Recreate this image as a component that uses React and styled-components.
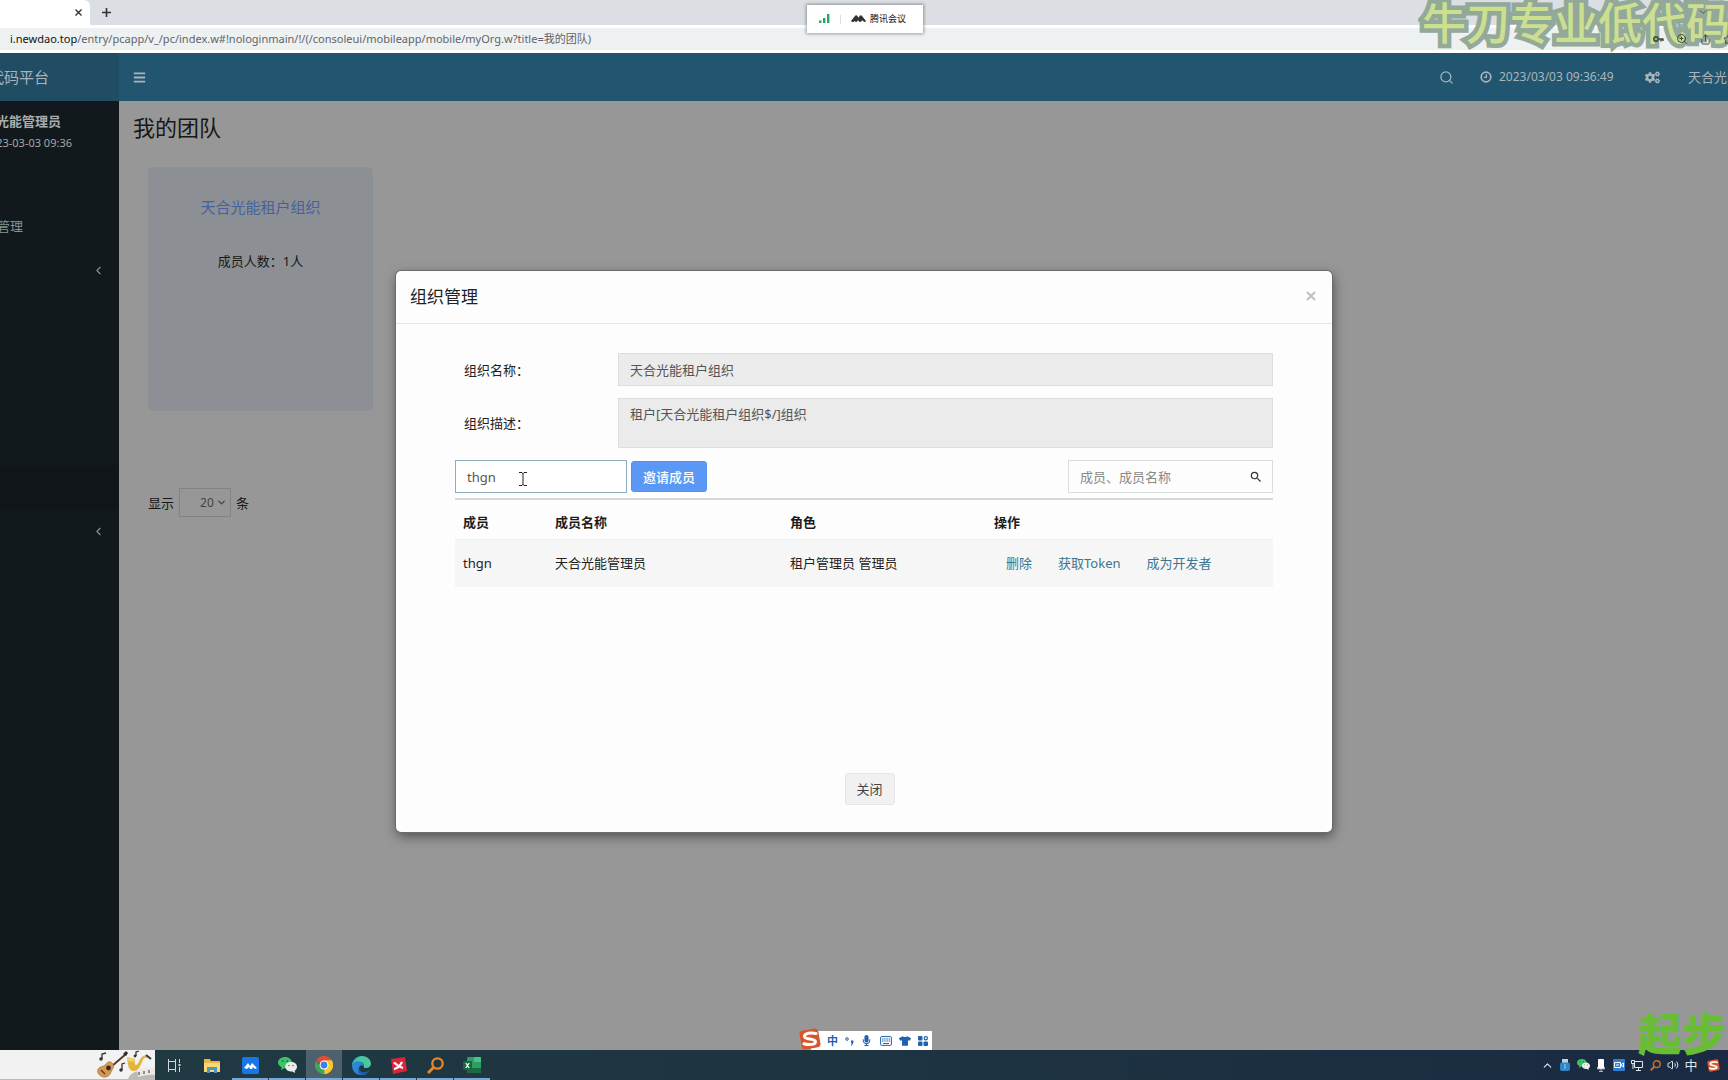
import React from "react";
import styled, { createGlobalStyle, css } from "styled-components";
import { Search, ZoomIn, Share, Star, ChevronDown, ChevronLeft, ChevronUp, Volume2 } from "lucide-react";
import { FaBars, FaCogs, FaMicrophone, FaTshirt } from "react-icons/fa";
import { MdSearch } from "react-icons/md";

const GlobalStyle = createGlobalStyle`
  * { box-sizing: border-box; }
  html, body, #root { height: 100%; }
  body {
    margin: 0;
    overflow: hidden;
    background: #979797;
    color: #222;
    font: 13px/20px "Noto Sans", "Noto Sans CJK SC", sans-serif;
  }
  button, input, select, textarea { font: inherit; margin: 0; }
  svg { display: block; flex: none; }
`;

const Desktop = styled.div`
  position: relative;
  height: 100vh;
  display: flex;
  flex-direction: column;
  overflow: hidden;
`;

/* ---------- browser chrome ---------- */

const TabStrip = styled.div`
  flex: none;
  display: flex;
  height: 25px;
  background: #dbdfe3;
`;

const Tab = styled.div`
  width: 90px;
  padding-right: 6px;
  display: flex;
  align-items: center;
  justify-content: flex-end;
  background: #fff;
  border-top-right-radius: 6px;
`;

const ChromeButton = styled.button`
  width: ${({ $wide }) => ($wide ? "32px" : "12px")};
  height: 25px;
  padding: 0;
  border: none;
  background: none;
  color: #333;
  display: flex;
  align-items: center;
  justify-content: center;
`;

const AddressBar = styled.div`
  flex: none;
  height: 28px;
  display: flex;
  align-items: center;
  padding-left: 10px;
  background: #eef1f2;
  border: solid #fff;
  border-width: 3px 0;
`;

const Url = styled.div`
  font-size: 11px;
  color: #5f6467;
  white-space: nowrap;

  b {
    font-weight: 400;
    color: #111;
  }
`;

/* ---------- application ---------- */

const AppArea = styled.div`
  position: relative;
  flex: 1;
  min-height: 0;
  display: flex;
  flex-direction: column;
`;

const Header = styled.header`
  flex: none;
  display: flex;
  height: 48px;
  background: #22556f;
  color: #a9b5bc;
`;

const Brand = styled.div`
  width: 119px;
  padding-right: 70px;
  display: flex;
  align-items: center;
  justify-content: flex-end;
  overflow: hidden;
  white-space: nowrap;
  background: #204c64;
  font-size: 15px;
`;

const HeaderBar = styled.div`
  flex: 1;
  min-width: 0;
  display: flex;
  align-items: center;
  justify-content: space-between;
  padding-left: 14px;
`;

const HeaderTools = styled.div`
  display: flex;
  align-items: center;
  width: 289px;
  overflow: hidden;
  white-space: nowrap;
`;

const IconButton = styled.button`
  flex: none;
  padding: 0;
  border: none;
  background: none;
  color: inherit;
  display: flex;
`;

const Clock = styled.div`
  flex: none;
  display: flex;
  align-items: center;
  gap: 7px;
  width: 138px;
  margin: 0 27px 0 26px;
  font-size: 12px;
`;

const UserName = styled.span`
  flex: none;
  margin-left: 28px;
`;

const Columns = styled.div`
  flex: 1;
  min-height: 0;
  display: flex;
`;

const Sidebar = styled.aside`
  width: 119px;
  flex: none;
  display: flex;
  flex-direction: column;
  overflow: hidden;
  background: #12191c;
  color: #a3a8aa;
`;

const UserPanel = styled.div`
  flex: none;
  height: 103px;
  padding-top: 10px;
  display: flex;
  flex-direction: column;
  white-space: nowrap;

  strong {
    align-self: flex-start;
    width: 61px;
    display: flex;
    justify-content: flex-end;
    color: #a9adaf;
  }

  span {
    width: 72px;
    display: flex;
    justify-content: flex-end;
    font-size: 11px;
    line-height: 24px;
  }
`;

const MenuItem = styled.a`
  flex: none;
  height: 44px;
  padding-right: 14px;
  display: flex;
  align-items: center;
  justify-content: space-between;
  color: #85939a;
  text-decoration: none;
  white-space: nowrap;
  background: ${({ $dark }) => ($dark ? "#0f1518" : "none")};
`;

const MenuText = styled.span`
  width: 23px;
  display: flex;
  justify-content: flex-end;
`;

const MenuSpace = styled.div`
  height: 173px;
`;

const Content = styled.main`
  flex: 1;
  min-width: 0;
  background: #979797;
  color: #181818;
`;

const PageTitle = styled.h1`
  margin: 0;
  padding: 10px 14px 0;
  font-size: 22px;
  line-height: 32px;
  font-weight: 400;
`;

const TeamCard = styled.section`
  width: 225px;
  height: 244px;
  margin: 24px 29px 0;
  padding-top: 30px;
  border-radius: 5px;
  background: #8c8f94;
  text-align: center;
`;

const TeamName = styled.h2`
  margin: 0 0 34px;
  font-size: 15px;
  line-height: 20px;
  font-weight: 400;
  color: #4661a0;
`;

const Pager = styled.label`
  display: flex;
  align-items: center;
  margin: 77px 29px 0;
`;

const SelectWrap = styled.span`
  display: flex;
  align-items: center;
  width: 52px;
  height: 29px;
  margin: 0 5px;
  border: 1px solid #838383;

  svg {
    margin-left: -14px;
    pointer-events: none;
  }
`;

const PageSize = styled.select`
  width: 50px;
  height: 27px;
  padding: 0 0 0 20px;
  border: none;
  appearance: none;
  background: none;
  color: #444;
  font-size: 12px;
`;

/* ---------- dialog ---------- */

const Overlay = styled.div`
  position: absolute;
  inset: 0;
  display: flex;
  align-items: center;
  justify-content: center;
`;

const Dialog = styled.section`
  width: 936px;
  min-height: 561px;
  display: flex;
  flex-direction: column;
  border-radius: 5px;
  background: #fdfdfd;
  box-shadow: 0 0 0 1px #6b6b6b, 1px 4px 12px rgba(0, 0, 0, 0.5);
`;

const DialogHeader = styled.div`
  height: 53px;
  padding: 0 15px 0 14px;
  display: flex;
  align-items: center;
  justify-content: space-between;
  border-bottom: 1px solid #e8e8e8;

  h2 {
    margin: 0;
    font-size: 17px;
    line-height: 24px;
    font-weight: 400;
  }
`;

const DialogBody = styled.div`
  flex: 1;
  padding: 29px 59px 0;
  display: flex;
  flex-direction: column;
`;

const FormRow = styled.div`
  display: flex;
  align-items: center;
  margin-bottom: 12px;

  label {
    width: 163px;
    flex: none;
    padding-left: 9px;
  }
`;

const field = css`
  flex: 1;
  min-width: 0;
  padding: 5px 11px;
  border: 1px solid #dedede;
  border-radius: 0;
  background: #ebebeb;
  color: #555;
`;

const TextInput = styled.input`
  ${field}
  height: 33px;
`;

const TextArea = styled.textarea`
  ${field}
  height: 50px;
  resize: none;
  overflow: hidden;
`;

const Toolbar = styled.div`
  display: flex;
  align-items: center;
  height: 33px;
  margin-bottom: 5px;
`;

const InviteInput = styled.input`
  width: 172px;
  height: 33px;
  padding: 0 11px;
  border: 1px solid #8fadbd;
  background: #fff;
  color: #555;
  outline: none;
`;

const InviteButton = styled.button`
  height: 31px;
  margin-left: 4px;
  padding: 0 11px;
  border: 1px solid #5590ea;
  border-radius: 3px;
  background: #5b98f5;
  color: #fff;
  font-weight: 500;
`;

const SearchBox = styled.label`
  width: 205px;
  height: 33px;
  margin-left: auto;
  padding: 0 9px 0 11px;
  display: flex;
  align-items: center;
  border: 1px solid #dcdcdc;
  color: #333;

  input {
    flex: 1;
    min-width: 0;
    padding: 0;
    border: none;
    outline: none;
    background: none;
  }

  input::placeholder {
    color: #888;
    opacity: 1;
  }
`;

const MemberTable = styled.table`
  width: 100%;
  table-layout: fixed;
  border-collapse: collapse;
  border-top: 2px solid #d8d8d8;

  th {
    height: 40px;
    padding: 6px 8px 0;
    text-align: left;
    color: #1c1c1c;
  }

  td {
    height: 48px;
    padding: 0 8px;
    background: #f6f6f6;
    border-top: 1px solid #f0f0f0;
  }
`;

const Actions = styled.div`
  display: flex;
  gap: 26px;
  padding-left: 12px;
  white-space: nowrap;

  a {
    color: #3c7590;
    text-decoration: none;
  }
`;

const DialogFooter = styled.div`
  display: flex;
  justify-content: center;
  padding: 0 0 27px 11px;
`;

const CloseButton = styled.button`
  width: 50px;
  height: 32px;
  padding: 0;
  border: 1px solid #e6e6e6;
  border-radius: 3px;
  background: #f1f1f1;
  color: #444;
`;

/* ---------- things floating over the desktop ---------- */

const MeetingWidget = styled.div`
  position: absolute;
  top: 5px;
  left: calc(50% - 57px);
  width: 116px;
  height: 28px;
  padding-left: 12px;
  display: flex;
  align-items: center;
  background: #fff;
  box-shadow: 0 0 3px 1px rgba(0, 0, 0, 0.35);
  font-size: 9px;
  color: #111;
  white-space: nowrap;

  i {
    width: 1px;
    height: 9px;
    margin: 0 10px;
    background: #ddd;
  }

  span {
    margin-left: 4px;
  }
`;

const Watermark = styled.div`
  position: absolute;
  top: 0;
  right: -2px;
  font-size: 44px;
  line-height: 46px;
  font-weight: 500;
  white-space: nowrap;
  color: #cbdf8b;
  -webkit-text-stroke: 9px #8fa695;
  paint-order: stroke fill;
  opacity: 0.95;
`;

// sits above the watermark so the icons stay visible through it
const ToolIcons = styled.div`
  position: absolute;
  top: 33px;
  right: -6px;
  display: flex;
  align-items: center;
  gap: 12px;
  color: #3c4a30;
`;

const WindowCaret = styled.div`
  position: absolute;
  top: 6px;
  right: 19px;
  color: #4c5c40;
`;

const CornerMark = styled.div`
  position: absolute;
  right: 2px;
  bottom: 30px;
  font-size: 44px;
  line-height: 32px;
  font-weight: 900;
  color: #68bd35;
`;

const CursorAnchor = styled.div`
  position: absolute;
  width: 936px;
  height: 561px;
  pointer-events: none;
`;

const Cursor = styled.svg`
  position: absolute;
  left: 123px;
  top: 201px;
`;

const ImeBar = styled.div`
  position: absolute;
  bottom: 30px;
  left: calc(50% - 53px);
  width: 121px;
  height: 19px;
  padding: 0 4px 0 16px;
  display: flex;
  align-items: center;
  justify-content: space-between;
  background: #fff;
  color: #1f62ad;
  font-size: 11px;
  font-weight: 700;
`;

const ImeLogo = styled.span`
  position: absolute;
  left: -12px;
  top: -3px;
`;

/* ---------- taskbar ---------- */

const Taskbar = styled.footer`
  flex: none;
  height: 30px;
  display: flex;
  background: linear-gradient(90deg, #203a42, #1e3441 50%, #1a2a42);
`;

const TaskSearch = styled.div`
  width: 155px;
  display: flex;
  justify-content: flex-end;
  background: #f2f2f2;
  border-bottom: 1px solid #bbb;
`;

const TaskButton = styled.button`
  width: 36px;
  height: 30px;
  margin-right: ${({ $open }) => ($open ? "1px" : "2px")};
  padding: 0;
  border: none;
  display: flex;
  align-items: center;
  justify-content: center;
  background: ${({ $active }) => ($active ? "#4c616b" : "none")};
  box-shadow: ${({ $open }) => ($open ? "inset 0 -2px 0 #76a9d8" : "none")};
`;

const Tasks = styled.div`
  display: flex;
  padding-left: 1px;
`;

const Tray = styled.div`
  margin-left: auto;
  padding-right: 2px;
  display: flex;
  align-items: center;
  color: #dfe6ec;

  & > span {
    width: 18px;
    display: flex;
    justify-content: center;
  }

  & > span:last-child {
    width: 26px;
  }
`;

/* ---------- drawings ---------- */

const ClockIcon = () => (
  <svg width="12" height="12" viewBox="0 0 12 12" fill="none" stroke="currentColor" strokeWidth="1.7">
    <circle cx="6" cy="6" r="4.8" />
    <path d="M6.4 3.2v3.2H4" strokeWidth="1.3" />
  </svg>
);

const KeyIcon = () => (
  <svg width="11" height="8" viewBox="0 0 11 8" fill="none" stroke="currentColor" strokeWidth="1.500">
    <circle cx="3" cy="4" r="2.200" />
    <path d="M5 4h5.500M8 4v2.500M10 4v2" />
  </svg>
);

const SignalIcon = () => (
  <svg width="11" height="10" viewBox="0 0 11 10" fill="#27a56b">
    <rect x="0" y="6.500" width="2.400" height="2.500" />
    <rect x="4" y="4" width="2.400" height="5" />
    <rect x="8" y="0" width="2.400" height="9" />
  </svg>
);

const MeetingMark = ({ size = 15, color = "#333" }) => (
  <svg width={size} height={size / 2} viewBox="0 0 16 8" fill={color}>
    <path d="M0 6.500 4 1.200Q5.500-.5 7 1.200L8 2.800 9 1.400Q10.500-.5 12 1.200L16 6.500Q15 8 13.500 7L12 5.600 11 7Q9.500 8 8.600 7L7.500 5.600 6.500 7Q5 8 4 6.400L3 7.300Q1 8 0 6.500z" />
  </svg>
);

const SogouLogo = ({ size = 22 }) => (
  <svg width={size} height={size} viewBox="0 0 22 22">
    <rect x="1.500" y="1.500" width="19" height="19" rx="3" fill="#d9562c" transform="rotate(-10 11 11)" />
    <path d="M17 5.500C12 4.500 5.500 5 5.500 8.500s11 1.500 11 5.200c0 3-6.500 3.500-11.500 2" fill="none" stroke="#fff" strokeWidth="3" strokeLinecap="round" />
  </svg>
);

const PunctIcon = () => (
  <svg width="9" height="10" viewBox="0 0 9 10">
    <circle cx="2" cy="3" r="1.300" fill="none" stroke="#1f62ad" />
    <path d="M6 4.500h2.400v2L7 9.500H6L6.800 7H6z" fill="#1f62ad" />
  </svg>
);

const KeyboardIcon = () => (
  <svg width="12" height="10" viewBox="0 0 12 10" fill="none" stroke="#1f62ad">
    <rect x=".6" y=".6" width="10.800" height="8.800" rx="1" />
    <path d="M2 3h8M2 5h8" strokeDasharray="1.500 .7" />
    <path d="M3 7.500h6" />
  </svg>
);

const GridIcon = () => (
  <svg width="10" height="10" viewBox="0 0 10 10" fill="#1f62ad">
    <rect width="4.500" height="4.500" rx="1" />
    <rect y="5.500" width="4.500" height="4.500" rx="1" />
    <rect x="5.500" y="5.500" width="4.500" height="4.500" rx="1" />
    <circle cx="7.800" cy="2.200" r="1.600" fill="none" stroke="#1f62ad" strokeWidth="1.200" />
  </svg>
);

const Instruments = () => (
  <svg width="60" height="29" viewBox="0 0 60 29">
    <path d="M17 16 31 4" stroke="#5a3a28" strokeWidth="2" />
    <path d="m28 4 3-3 2 2-2 3z" fill="#2e2a2a" />
    <path d="M3 19c2-3 5-2 7-4s4-5 7-2 1 5 0 7-2 6-6 7-10-3-8-8z" fill="#d49a50" stroke="#9a642c" strokeWidth=".6" />
    <circle cx="13.500" cy="18" r="2.400" fill="#3c2418" />
    <path d="m6 20 4 4" stroke="#5a3a28" strokeWidth="1.500" />
    <path d="M7 9V4l4-1M27 20v-6l3-1M41 6V2l3-1" fill="none" stroke="#333" strokeWidth="1.300" />
    <g fill="#333">
      <circle cx="6" cy="9" r="1.700" />
      <circle cx="26" cy="20" r="1.700" />
      <circle cx="40" cy="6" r="1.400" />
    </g>
    <path d="m32 7 8 2c0 3-1 6 1 6s3-4 5-7 5-3 7-2l-1 2c-3-1-4 1-5 4-2 5-4 9-8 9-6 0-6-7-7-14z" fill="#e3b53c" />
    <path d="m32 7 8 2-1 3-6-1z" fill="#f2d268" />
    <path d="m51 5 5 4" stroke="#3a3a3a" strokeWidth="2" />
    <path d="M33 29c2-5 6-7 10-8 6-3 12-2 17-2v10H33z" fill="#bdb9b6" />
    <path d="M42 20c6-2 12-2 18-2v7c-7-1-12 1-17 2z" fill="#ece9e4" />
    <path d="M44 25v-3m5 2v-3m5 2v-3" stroke="#333" />
  </svg>
);

const TaskViewIcon = () => (
  <svg width="14" height="13" viewBox="0 0 14 13" fill="none" stroke="#d3dbde">
    <path d="M1.500 0v2.500h7V0M1.500 13v-2.500h7V13M1.500 2.500v8M8.500 2.500v8M12.500 0v4M12.500 8v5" />
    <path d="M12.500 5v2" strokeWidth="2" />
  </svg>
);

const FolderIcon = () => (
  <svg width="18" height="15" viewBox="0 0 18 15">
    <path d="M1 1h6l1 2h9v10H1z" fill="#e8b44a" />
    <path d="M1 5h16v9H1z" fill="#f8d872" />
    <path d="M4 15V9h10v6h-3v-3H7v3z" fill="#4a98c8" />
  </svg>
);

const MeetingIcon = () => (
  <svg width="17" height="17" viewBox="0 0 17 17">
    <rect width="17" height="17" rx="2" fill="#1976e6" />
    <path d="m2 11 4-5 2 3 2-3 5 5-2 1-2-2-1 2H8l-1-2-2 2z" fill="#fff" />
  </svg>
);

const WechatIcon = ({ size = 19 }) => (
  <svg width={size} height={size * 0.85} viewBox="0 0 19 16">
    <path d="M7 0c4 0 7 2.500 7 5.500S11 11 7 11l-4 2 .7-2.700C1.500 9.300 0 7.500 0 5.500 0 2.500 3 0 7 0z" fill="#3cc566" />
    <path d="M13 5c3.500 0 6 2 6 4.800 0 1.700-.9 3-2.300 3.900l.5 2.300-2.700-1.500c-4.500.3-7.300-2-7.300-4.700C7.200 7 9.600 5 13 5z" fill="#e9eeec" />
    <g fill="#1f6a3c">
      <circle cx="4.800" cy="4" r=".9" />
      <circle cx="9.300" cy="4" r=".9" />
      <circle cx="11" cy="8.500" r=".7" />
      <circle cx="15" cy="8.500" r=".7" />
    </g>
  </svg>
);

const ChromeIcon = () => (
  <svg width="18" height="18" viewBox="0 0 18 18">
    <path d="M9 9 1.200 4.500A9 9 0 0 1 16.800 4.500z" fill="#e34a3c" />
    <path d="M9 9V4.500h7.800A9 9 0 0 1 9 18z" fill="#f6c92e" />
    <path d="M9 9 9.500 18A9 9 0 0 1 1.200 4.500L5 11z" fill="#3fa757" />
    <path d="M9 4.500h7.800a9 9 0 0 1-7.600 13.500L13 11z" fill="#f6c92e" />
    <circle cx="9" cy="9" r="4.500" fill="#fff" />
    <circle cx="9" cy="9" r="3.400" fill="#3f7fe8" />
  </svg>
);

const EdgeIcon = () => (
  <svg width="19" height="19" viewBox="0 0 19 19">
    <path d="M0 9C1 3.500 5 0 9.500 0 15 0 19 3.500 19 7.800c0 2.500-2 4.200-4.800 4.200-2 0-3-.8-2.400-1.800C12.500 8 10.500 6 7.500 6 4 6 1.500 7.500 0 9z" fill="#4cc8a0" />
    <path d="M0 9.500C.5 4 5 1 9 1.800 5 3 3 5 0 9.500z" fill="#37b0d8" />
    <path d="M0 9.500C0 7 4 4.800 7.500 5.300c3 .4 4.700 2.500 4.200 4.700C10 8.500 7 9.500 7 12.500c0 3 3.500 5 7 4.500-1.500 1.300-3 2-5 2-5 0-9-4-9-9.500z" fill="#2a86d6" />
    <path d="M7 12c0 3 3 5 7 4 2-.5 3-1.500 3.800-2.500C17 17 13.500 19 10.500 19 6 18.500 5 14.500 7 12z" fill="#1d5fb0" />
  </svg>
);

const RedIcon = () => (
  <svg width="17" height="17" viewBox="0 0 17 17">
    <path d="m1 2 14-2 2 14-14 3z" fill="#d8263d" />
    <path d="M4 5.500q4 4 9 5.500M4 12q5-1 8-7" fill="none" stroke="#fff" strokeWidth="2.200" />
  </svg>
);

const FinderIcon = ({ size = 17, color = "#e8852a" }) => (
  <svg width={size} height={size} viewBox="0 0 17 17" fill="none" stroke={color}>
    <circle cx="10.500" cy="6.500" r="5.200" strokeWidth="2.300" />
    <path d="M6.500 10.500 1 16" strokeWidth="3" />
  </svg>
);

const ExcelIcon = () => (
  <svg width="18" height="16" viewBox="0 0 18 16">
    <rect x="4" width="14" height="16" rx="1" fill="#2e9e62" />
    <path d="M11 0h6q1 0 1 1v4h-7z" fill="#45c486" />
    <path d="M4 11h14v4q0 1-1 1H5q-1 0-1-1z" fill="#1b6b42" />
    <rect y="4" width="9" height="9" rx="1" fill="#16693c" />
    <path d="m2.800 6 3.400 5M6.200 6l-3.400 5" stroke="#fff" strokeWidth="1.300" />
  </svg>
);

const UsbIcon = () => (
  <svg width="10" height="12" viewBox="0 0 10 12">
    <rect x="2" width="6" height="4" fill="#b9d4e6" />
    <rect y="3.500" width="10" height="8.500" rx="2" fill="#2f86c8" />
    <path d="M5 5v5" stroke="#9fd0f0" />
  </svg>
);

const MicIcon = () => (
  <svg width="8" height="13" viewBox="0 0 8 13">
    <rect x="1" width="6" height="10" rx="1" fill="#fff" />
    <path d="M.5 8v2h7V8M4 10v2.500M2 12.500h4" fill="none" stroke="#aab4bc" />
  </svg>
);

const CameraIcon = () => (
  <svg width="12" height="12" viewBox="0 0 12 12">
    <rect width="12" height="12" rx="1" fill="#2c7fd0" />
    <path d="M1.500 3.500h6v5h-6zM7.500 6l3-2v4z" fill="none" stroke="#fff" />
    <path d="M3 6h3" stroke="#fff" />
  </svg>
);

const MonitorIcon = () => (
  <svg width="12" height="11" viewBox="0 0 12 11" fill="none" stroke="#dfe6ec">
    <path d="M3.500 1.500h8v6h-8zM5 10.500h5M7.500 8v2M.5.500h3v3h-3zM2 4v5" />
  </svg>
);

const tasks = [
  { name: "文件资源管理器", icon: <FolderIcon /> },
  { name: "腾讯会议", icon: <MeetingIcon />, open: true },
  { name: "微信", icon: <WechatIcon />, open: true },
  { name: "Chrome", icon: <ChromeIcon />, open: true, active: true },
  { name: "Edge", icon: <EdgeIcon />, open: true },
  { name: "Xmind", icon: <RedIcon />, open: true },
  { name: "Everything", icon: <FinderIcon />, open: true },
  { name: "Excel", icon: <ExcelIcon />, open: true },
];

const members = [{ id: "thgn", name: "天合光能管理员", role: "租户管理员 管理员" }];

const OrgDialog = () => (
  <Overlay>
    <Dialog role="dialog" aria-labelledby="dialog-title">
      <DialogHeader>
        <h2 id="dialog-title">组织管理</h2>
        <IconButton aria-label="关闭窗口">
          <svg width="12" height="14" viewBox="0 0 12 14" stroke="#c0c0c0" strokeWidth="2">
            <path d="m2 2 8 8M10 2l-8 8" />
          </svg>
        </IconButton>
      </DialogHeader>
      <DialogBody>
        <FormRow>
          <label htmlFor="org-name">组织名称：</label>
          <TextInput id="org-name" readOnly value="天合光能租户组织" />
        </FormRow>
        <FormRow>
          <label htmlFor="org-desc">组织描述：</label>
          <TextArea id="org-desc" readOnly value="租户[天合光能租户组织$/]组织" />
        </FormRow>
        <Toolbar>
          <InviteInput aria-label="邀请成员账号" defaultValue="thgn" />
          <InviteButton>邀请成员</InviteButton>
          <SearchBox>
            <input aria-label="搜索成员" placeholder="成员、成员名称" />
            <MdSearch size={14} />
          </SearchBox>
        </Toolbar>
        <MemberTable>
          <colgroup>
            <col width="92" />
            <col width="235" />
            <col width="204" />
            <col />
          </colgroup>
          <thead>
            <tr>
              <th>成员</th>
              <th>成员名称</th>
              <th>角色</th>
              <th>操作</th>
            </tr>
          </thead>
          <tbody>
            {members.map((m) => (
              <tr key={m.id}>
                <td>{m.id}</td>
                <td>{m.name}</td>
                <td>{m.role}</td>
                <td>
                  <Actions>
                    <a href="#delete">删除</a>
                    <a href="#token">获取Token</a>
                    <a href="#developer">成为开发者</a>
                  </Actions>
                </td>
              </tr>
            ))}
          </tbody>
        </MemberTable>
      </DialogBody>
      <DialogFooter>
        <CloseButton>关闭</CloseButton>
      </DialogFooter>
    </Dialog>
    <CursorAnchor>
      <Cursor width="8" height="14" viewBox="0 0 8 14" fill="none" stroke="#222">
        <path d="M0 .5h3l1 1 1-1h3M4 1v12M0 13.500h3l1-1 1 1h3" />
      </Cursor>
    </CursorAnchor>
  </Overlay>
);

const App = () => {
  return (
    <Desktop>
      <GlobalStyle />
      <TabStrip>
        <Tab>
          <ChromeButton aria-label="关闭标签页">
            <svg width="7" height="7" viewBox="0 0 7 7" stroke="currentColor" strokeWidth="1.400">
              <path d="m.5.5 6 6M6.500.5l-6 6" />
            </svg>
          </ChromeButton>
        </Tab>
        <ChromeButton $wide aria-label="新标签页">
          <svg width="9" height="9" viewBox="0 0 9 9" stroke="currentColor" strokeWidth="1.600">
            <path d="M4.500 0v9M0 4.500h9" />
          </svg>
        </ChromeButton>
      </TabStrip>
      <AddressBar>
        <Url>
          <b>i.newdao.top</b>/entry/pcapp/v_/pc/index.w#!nologinmain/!/(/consoleui/mobileapp/mobile/myOrg.w?title=我的团队)
        </Url>
      </AddressBar>

      <AppArea>
        <Header>
          <Brand>代码平台</Brand>
          <HeaderBar>
            <IconButton aria-label="菜单">
              <FaBars size={13} />
            </IconButton>
            <HeaderTools>
              <IconButton aria-label="搜索">
                <Search size={15} />
              </IconButton>
              <Clock>
                <ClockIcon />
                2023/03/03 09:36:49
              </Clock>
              <IconButton aria-label="设置">
                <FaCogs size={15} />
              </IconButton>
              <UserName>天合光能管理员</UserName>
            </HeaderTools>
          </HeaderBar>
        </Header>
        <Columns>
          <Sidebar>
            <UserPanel>
              <strong>光能管理员</strong>
              <span>2023-03-03 09:36</span>
            </UserPanel>
            <MenuItem href="#manage">
              <MenuText>管理</MenuText>
            </MenuItem>
            <MenuItem href="#group" aria-label="展开">
              <MenuText />
              <ChevronLeft size={13} />
            </MenuItem>
            <MenuSpace />
            <MenuItem href="#current" aria-label="当前菜单" $dark />
            <MenuItem href="#more" aria-label="展开">
              <MenuText />
              <ChevronLeft size={13} />
            </MenuItem>
          </Sidebar>
          <Content>
            <PageTitle>我的团队</PageTitle>
            <TeamCard>
              <TeamName>天合光能租户组织</TeamName>
              成员人数：1人
            </TeamCard>
            <Pager>
              显示
              <SelectWrap>
                <PageSize defaultValue="20">
                  <option>20</option>
                  <option>50</option>
                </PageSize>
                <ChevronDown size={11} strokeWidth={3} color="#444" />
              </SelectWrap>
              条
            </Pager>
          </Content>
        </Columns>
        <OrgDialog />
      </AppArea>

      <Taskbar>
        <TaskSearch>
          <Instruments />
        </TaskSearch>
        <Tasks>
          <TaskButton aria-label="任务视图">
            <TaskViewIcon />
          </TaskButton>
          {tasks.map((t) => (
            <TaskButton key={t.name} aria-label={t.name} $open={t.open} $active={t.active}>
              {t.icon}
            </TaskButton>
          ))}
        </Tasks>
        <Tray>
          <span><ChevronUp size={13} /></span>
          <span><UsbIcon /></span>
          <span><WechatIcon size={13} /></span>
          <span><MicIcon /></span>
          <span><CameraIcon /></span>
          <span><MonitorIcon /></span>
          <span><FinderIcon size={11} color="#c8702c" /></span>
          <span><Volume2 size={12} /></span>
          <span>中</span>
          <span><SogouLogo size={13} /></span>
        </Tray>
      </Taskbar>

      <MeetingWidget>
        <SignalIcon />
        <i />
        <MeetingMark />
        <span>腾讯会议</span>
      </MeetingWidget>
      <Watermark>牛刀专业低代码</Watermark>
      <WindowCaret>
        <ChevronDown size={12} />
      </WindowCaret>
      <ToolIcons>
        <KeyIcon />
        <ZoomIn size={12} />
        <Share size={11} />
        <Star size={11} />
      </ToolIcons>
      <CornerMark>起步</CornerMark>
      <ImeBar>
        <ImeLogo>
          <SogouLogo />
        </ImeLogo>
        <span>中</span>
        <PunctIcon />
        <FaMicrophone size={11} />
        <KeyboardIcon />
        <FaTshirt size={12} />
        <GridIcon />
      </ImeBar>
    </Desktop>
  );
};

export default App;
